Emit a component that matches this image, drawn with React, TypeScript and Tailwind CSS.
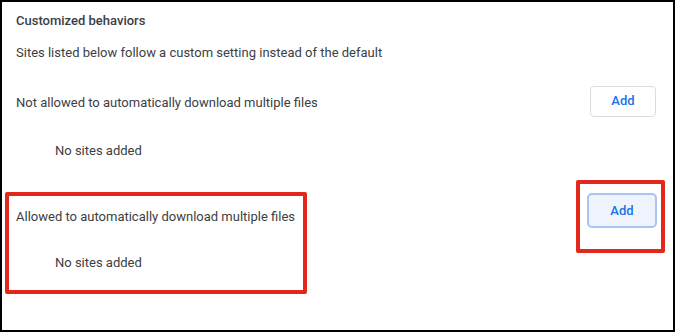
export default function App() {
  return (
    <div
      className="relative w-[675px] h-[332px] bg-white border-2 border-black text-[13px] text-[#3c4043] overflow-hidden"
      style={{ fontFamily: "Roboto, 'Liberation Sans', sans-serif" }}
    >
      <div className="h-[38px] flex items-center pl-[14px] font-medium">
        Customized behaviors
      </div>

      <div className="h-[26px] flex items-center pl-[14px]">
        Sites listed below follow a custom setting instead of the default
      </div>

      <div className="h-[72px] flex items-center justify-between pl-[14px] pr-[17px]">
        <span className="mt-[2px]">Not allowed to automatically download multiple files</span>
        <button className="mb-[2px] w-[66px] h-[31px] bg-white border border-[#dadce0] rounded-[4px] text-[#1a73e8] font-medium">
          Add
        </button>
      </div>

      <div className="h-[26px] flex items-center pl-[53px]">No sites added</div>

      <div className="h-[86px] flex items-start justify-between pl-[14px] pr-[16px]">
        <span className="mt-[43px] leading-[20px]">Allowed to automatically download multiple files</span>
        <button className="mt-[29px] w-[70px] h-[35px] bg-[#eef3fd] border-2 border-[#a8c4f3] rounded-[5px] text-[#1a73e8] font-medium">
          Add
        </button>
      </div>

      <div className="h-[26px] flex items-center pl-[53px]">No sites added</div>

      <div className="absolute left-[3px] top-[190px] w-[302px] h-[102px] border-4 border-[#e2271b] rounded-[2px]" />
      <div className="absolute left-[574px] top-[178px] w-[89px] h-[73px] border-4 border-[#e2271b] rounded-[2px]" />
    </div>
  )
}
